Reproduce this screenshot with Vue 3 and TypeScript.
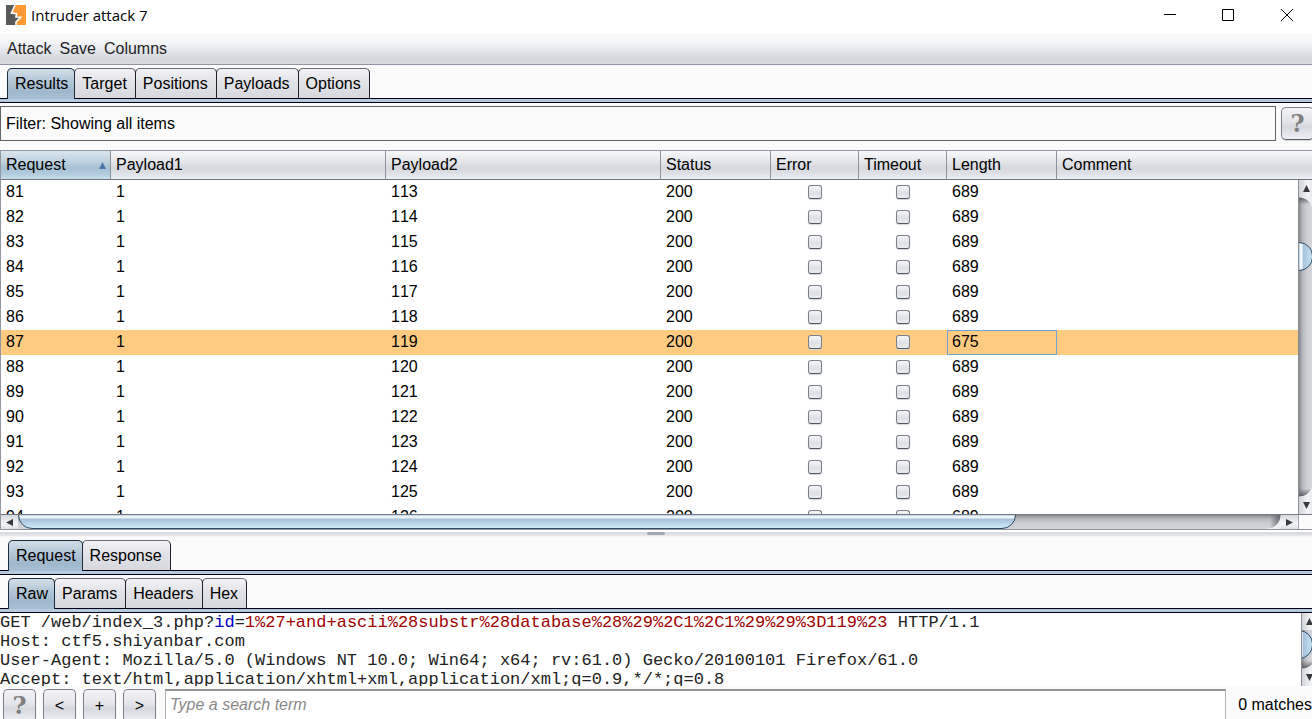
<script setup lang="ts">
import { ref } from 'vue'

interface Row {
  id: number
  payload1: string
  payload2: number
  status: number
  length: number
}

const menus = ['Attack', 'Save', 'Columns']
const mainTabs = ['Results', 'Target', 'Positions', 'Payloads', 'Options']
const messageTabs = ['Request', 'Response']
const viewTabs = ['Raw', 'Params', 'Headers', 'Hex']
const activeMain = ref('Results')
const activeMessage = ref('Request')
const activeView = ref('Raw')
const selected = ref(87)
const search = ref('')

const columns = [
  { name: 'Request', cls: 'w-request' },
  { name: 'Payload1', cls: 'w-payload' },
  { name: 'Payload2', cls: 'w-payload' },
  { name: 'Status', cls: 'w-request' },
  { name: 'Error', cls: 'w-flag' },
  { name: 'Timeout', cls: 'w-flag' },
  { name: 'Length', cls: 'w-request' },
  { name: 'Comment', cls: '' },
]

const rows: Row[] = Array.from({ length: 14 }, (_, i) => ({
  id: 81 + i,
  payload1: '1',
  payload2: 113 + i,
  status: 200,
  length: 81 + i === 87 ? 675 : 689,
}))
</script>

<template>
  <div class="window">
    <header class="titlebar">
      <svg class="logo" viewBox="0 0 20 20" aria-hidden="true">
        <rect width="20" height="20" fill="#58595b" />
        <path d="M9 0H20V20H10L9.500 17L14.500 12L10 11.500V8.500L5.500 8Z" fill="#ff9933" />
        <path d="M9 0L5.500 8L10.500 8.700L10 12L14.700 12.300L10 17V20" fill="none" stroke="#fff" stroke-width="1.600" />
      </svg>
      <h1>Intruder attack 7</h1>
      <div class="controls">
        <button type="button" aria-label="Minimize"><svg viewBox="0 0 12 12"><path d="M0 5.500H12" /></svg></button>
        <button type="button" aria-label="Maximize"><svg viewBox="0 0 12 12"><path d="M.5 .5H11.500V11.500H.5Z" /></svg></button>
        <button type="button" aria-label="Close"><svg viewBox="0 0 12 12"><path d="M0 0L12 12M12 0L0 12" /></svg></button>
      </div>
    </header>

    <nav class="menubar">
      <button v-for="m in menus" :key="m" type="button">{{ m }}</button>
    </nav>

    <div class="tabs main" role="tablist">
      <button v-for="t in mainTabs" :key="t" type="button" role="tab" :aria-selected="activeMain === t" :class="{ active: activeMain === t }" @click="activeMain = t">{{ t }}</button>
    </div>

    <div class="filter">
      <button class="filter-box" type="button">Filter: Showing all items</button>
      <button class="tool help" type="button" aria-label="Help">?</button>
    </div>

    <section class="results">
      <div class="table-view">
        <table>
          <thead>
            <tr>
              <th v-for="(c, i) in columns" :key="c.name" :class="[c.cls, { sorted: i === 0 }]" scope="col">
                {{ c.name }}
                <svg v-if="i === 0" class="sort" viewBox="0 0 7 7" aria-hidden="true"><path d="M3.500 0L7 7H0Z" fill="#4a78ad" /></svg>
              </th>
            </tr>
          </thead>
          <tbody>
            <tr v-for="r in rows" :key="r.id" :class="{ selected: selected === r.id }" @click="selected = r.id">
              <td>{{ r.id }}</td>
              <td>{{ r.payload1 }}</td>
              <td>{{ r.payload2 }}</td>
              <td>{{ r.status }}</td>
              <td class="flag"><input type="checkbox" :aria-label="`Error, request ${r.id}`" /></td>
              <td class="flag"><input type="checkbox" :aria-label="`Timeout, request ${r.id}`" /></td>
              <td :class="{ focus: selected === r.id }">{{ r.length }}</td>
              <td></td>
            </tr>
          </tbody>
        </table>
        <div class="vscroll table-scroll">
          <button type="button" aria-label="Scroll up"><svg viewBox="0 0 7 7"><path d="M3.500 0L7 7H0Z" /></svg></button>
          <div class="track"><span class="cap-top"></span><span class="thumb"></span><span class="cap-bottom"></span></div>
          <button type="button" aria-label="Scroll down"><svg viewBox="0 0 7 7"><path d="M0 0H7L3.500 7Z" /></svg></button>
        </div>
      </div>
      <div class="hscroll">
        <button type="button" aria-label="Scroll left"><svg viewBox="0 0 7 7"><path d="M7 0V7L0 3.500Z" /></svg></button>
        <div class="htrack"><span class="hthumb"></span><span class="cap-right"></span></div>
        <button type="button" aria-label="Scroll right"><svg viewBox="0 0 7 7"><path d="M0 0L7 3.500L0 7Z" /></svg></button>
        <span class="corner"></span>
      </div>
    </section>

    <div class="splitter"><span></span></div>

    <div class="tabs" role="tablist">
      <button v-for="t in messageTabs" :key="t" type="button" role="tab" :aria-selected="activeMessage === t" :class="{ active: activeMessage === t }" @click="activeMessage = t">{{ t }}</button>
    </div>
    <div class="tabs" role="tablist">
      <button v-for="t in viewTabs" :key="t" type="button" role="tab" :aria-selected="activeView === t" :class="{ active: activeView === t }" @click="activeView = t">{{ t }}</button>
    </div>

    <section class="message">
      <pre>GET /web/index_3.php?<span class="param">id</span>=<span class="value">1%27+and+ascii%28substr%28database%28%29%2C1%2C1%29%29%3D119%23</span> HTTP/1.1
Host: ctf5.shiyanbar.com
User-Agent: Mozilla/5.0 (Windows NT 10.0; Win64; x64; rv:61.0) Gecko/20100101 Firefox/61.0
Accept: text/html,application/xhtml+xml,application/xml;q=0.9,*/*;q=0.8</pre>
      <div class="vscroll message-scroll">
        <button type="button" aria-label="Scroll up"><svg viewBox="0 0 7 7"><path d="M3.500 0L7 7H0Z" /></svg></button>
        <div class="track"><span class="thumb"></span><span class="cap-bottom"></span></div>
        <button type="button" aria-label="Scroll down"><svg viewBox="0 0 7 7"><path d="M0 0H7L3.500 7Z" /></svg></button>
      </div>
    </section>

    <footer class="search">
      <button class="tool help" type="button" aria-label="Search help">?</button>
      <button class="tool" type="button" aria-label="Previous match">&lt;</button>
      <button class="tool" type="button" aria-label="Add">+</button>
      <button class="tool" type="button" aria-label="Next match">&gt;</button>
      <input v-model="search" type="text" aria-label="Search" placeholder="Type a search term" />
      <output>0 matches</output>
    </footer>
  </div>
</template>

<style>
body {
  margin: 0;
  background: #fbfbfb;
}
</style>

<style scoped>
.window {
  display: flex;
  flex-direction: column;
  height: 100vh;
  overflow: hidden;
  background: #fbfbfb;
  color: #000;
  font: 16px/18px "Liberation Sans", Arial, sans-serif;
}
.window > * {
  flex: none;
}
.window * {
  box-sizing: border-box;
}
button {
  margin: 0;
  padding: 0;
  border: 0;
  background: none;
  color: inherit;
  font: inherit;
}
.titlebar {
  display: flex;
  align-items: center;
  height: 34px;
  padding: 0 0 4px 6px;
  background: #fff;
}
.logo {
  width: 20px;
  height: 20px;
}
h1 {
  margin: 0 auto 0 5px;
  font: 15px/20px "Open Sans", "Noto Sans", sans-serif;
}
.controls {
  display: flex;
  margin-right: -5px;
}
.controls button {
  display: flex;
  align-items: center;
  justify-content: center;
  width: 58px;
  height: 30px;
}
.controls button:last-child {
  width: 60px;
}
.controls svg {
  width: 12px;
  height: 12px;
  fill: none;
  stroke: #000;
  stroke-width: 1;
}
.menubar {
  display: flex;
  gap: 8px;
  height: 31px;
  padding: 0 7px 1px;
  border-bottom: 1px solid #8f95a3;
  background: linear-gradient(#f8f9fa 0, #f5f6f8 25%, #e3e6ea 55%, #d3d6dc 85%, #d9dce2 100%);
  color: #232323;
}
.tabs {
  display: flex;
  align-items: flex-end;
  height: 38px;
  padding: 3px 8px 0;
  background: linear-gradient(#000014, #000014) 0 33px / 100% 1px no-repeat, linear-gradient(#b5cade, #b5cade) 0 34px / 100% 3px no-repeat, linear-gradient(#000014, #000014) 0 37px / 100% 1px no-repeat;
}
.tabs.main {
  padding-left: 7px;
}
.tabs button {
  height: 30px;
  margin-right: -1px;
  margin-bottom: 5px;
  padding: 0 8px 0 7px;
  border: 1px solid #20202c;
  border-top-color: #696b76;
  border-bottom: 0;
  border-radius: 5px 5px 0 0;
  background: linear-gradient(#f3f3f6 0, #e3e4e8 40%, #d7d8de 100%);
}
.tabs button.active {
  z-index: 1;
  height: 31px;
  margin-bottom: 4px;
  padding: 0 6px 1px 7px;
  border-color: #1b2b3e;
  background: linear-gradient(#d3dfe8 0, #b2c6d6 40%, #a0b7cb 75%, #a8c0d5 100%);
}
.filter {
  display: flex;
  align-items: center;
  justify-content: space-between;
  gap: 5px;
  height: 47px;
  padding: 3px 0 9px;
  overflow: hidden;
}
.filter-box {
  flex: 1;
  height: 35px;
  padding-left: 5px;
  border: 1px solid #646464;
  text-align: left;
}
.tool {
  flex: none;
  width: 33px;
  height: 33px;
  border: 1px solid #7c808b;
  border-bottom-color: #545b68;
  border-radius: 5px;
  background: linear-gradient(#f4f4f7 0, #e3e4e9 45%, #d6d8df 60%, #eff0f6 100%);
  box-shadow: 0 1px 1px #d4d6db;
}
.help {
  color: #808080;
  font: bold 24px/24px "DejaVu Serif", serif;
}
.filter .tool {
  margin-right: -2px;
}
.results {
  display: flex;
  flex: 1 1 0;
  flex-direction: column;
  min-height: 0;
  border-top: 1px solid #9297a1;
  border-left: 1px solid #9297a1;
  background: #fff;
}
.table-view {
  position: relative;
  flex: 1 1 0;
  min-height: 0;
  overflow: hidden;
}
table {
  width: 100%;
  border-collapse: separate;
  border-spacing: 0;
  table-layout: fixed;
}
th {
  height: 29px;
  padding: 0 5px 1px;
  border-right: 1px solid #8e929c;
  border-bottom: 1px solid #6f7582;
  background: linear-gradient(#f8f9fb 0, #e2e4e8 40%, #d6d8de 60%, #dde0e6 80%, #edf0f5 100%);
  font-weight: normal;
  text-align: left;
  white-space: nowrap;
}
th:last-child {
  border-right: 0;
}
th.sorted {
  background: linear-gradient(#dce6ed 0, #bdd0de 40%, #a8c0d2 60%, #b4cede 85%, #c6e0f0 100%);
}
.sort {
  float: right;
  width: 7px;
  height: 7px;
  margin-top: 6px;
  margin-right: -1px;
}
.w-request {
  width: 110px;
}
.w-payload {
  width: 275px;
}
.w-flag {
  width: 88px;
}
td {
  height: 25px;
  padding: 0 5px 1px;
  font-kerning: none;
}
.selected td {
  background: #ffcb80;
}
.selected td.focus {
  box-shadow: inset 0 0 0 1px #73a4d1;
}
.flag {
  line-height: 0;
  text-align: center;
}
.flag input {
  width: 14px;
  height: 14px;
  margin: 0;
  border: 1px solid #7b7f89;
  border-bottom-color: #4e5460;
  border-radius: 3px;
  appearance: none;
  background: linear-gradient(#f7f7f9 0, #dcdfe4 60%, #eceef2 100%);
  box-shadow: 0 1px 1px #d4d6db;
  vertical-align: middle;
}
.vscroll {
  display: flex;
  flex-direction: column;
  border-left: 1px solid #8c8f94;
  background: #eef0f2;
  overflow: hidden;
}
.vscroll button {
  display: flex;
  flex: none;
  align-items: center;
  justify-content: center;
  width: 15px;
  height: 17px;
  background: linear-gradient(90deg, #d0d4d8, #f4f5f7 60%, #dfe2e6);
}
.vscroll svg,
.hscroll svg {
  width: 7px;
  height: 7px;
  fill: #3a3a3a;
}
.table-scroll {
  position: absolute;
  top: 29px;
  right: 0;
  bottom: 0;
  width: 14px;
}
.track {
  position: relative;
  flex: 1;
  overflow: hidden;
  background: linear-gradient(90deg, #85878d 0, #b4b5bb 25%, #cecfd5 60%, #d5d6dc 100%);
}
.cap-top,
.cap-bottom {
  position: absolute;
  left: 0;
  width: 14px;
  height: 12px;
}
.cap-top {
  top: 0;
  background: radial-gradient(circle at 0 14px, transparent 13px, #eceef0 14px), linear-gradient(#55585f, transparent 60%);
}
.cap-bottom {
  bottom: 0;
  background: radial-gradient(circle at 0 -2px, transparent 13px, #eceef0 14px), linear-gradient(transparent 30%, #55585f);
}
.thumb {
  position: absolute;
  top: 45px;
  left: -14px;
  width: 28px;
  height: 29px;
  border: 1px solid #2d4a66;
  border-radius: 14px;
  background: linear-gradient(90deg, #a4bfd6 50%, #f0f6fa 55%, #f0f6fa 62%, #a5c2dc 66%, #c6e2f2 100%);
}
.hscroll {
  display: flex;
  flex: none;
  height: 16px;
  border-top: 1px solid #777a80;
  border-bottom: 1px solid #8f9299;
}
.hscroll button {
  display: flex;
  flex: none;
  align-items: center;
  justify-content: center;
  width: 17px;
  background: linear-gradient(#d4d8dc, #f3f5f7 60%, #dfe2e6);
}
.htrack {
  position: relative;
  flex: 1;
  overflow: hidden;
  background: linear-gradient(#85878d 0, #b6b7bd 25%, #cecfd5 60%, #d3d4da 100%);
}
.hthumb {
  position: absolute;
  top: -14px;
  left: 0;
  width: 79%;
  height: 28px;
  border: 1px solid #2d4a66;
  border-radius: 14px;
  background: linear-gradient(#a4bfd6 50%, #edf4f9 54%, #edf4f9 60%, #a7c2db 67%, #cfebf7 100%);
}
.cap-right {
  position: absolute;
  top: 0;
  right: 0;
  width: 14px;
  height: 14px;
  background: radial-gradient(circle at 0 0, transparent 13px, #eceef0 14px), linear-gradient(90deg, transparent 20%, #63666c);
}
.corner {
  width: 14px;
  border-left: 1px solid #a3a6ac;
  background: #fbfbfb;
}
.splitter {
  display: flex;
  height: 7px;
  background: linear-gradient(#fff 0, #fff 2px, #d8dae0 2px, #dfe1e6 5px, #fbfbfb 7px);
}
.splitter span {
  width: 18px;
  height: 3px;
  margin: 2px auto 0;
  border-radius: 2px;
  background: #a4a7ae;
}
.message {
  display: flex;
  height: 73px;
  overflow: hidden;
  background: #fff;
}
pre {
  flex: 1;
  min-width: 0;
  margin: 0;
  overflow: hidden;
  color: #222;
  font: 17px/19px "Liberation Mono", "Courier New", monospace;
}
.param {
  color: #0000c0;
}
.value {
  color: #a00000;
}
.message-scroll {
  flex: none;
  width: 11px;
}
.message-scroll .thumb {
  top: 0;
  left: -17px;
}
.search {
  display: flex;
  gap: 7px;
  height: 33px;
  padding: 3px 0 0 3px;
  overflow: hidden;
}
.search input {
  flex: 1;
  min-width: 0;
  height: 33px;
  margin: 0 5px 0 2px;
  padding: 0 4px 2px;
  border: 1px solid #b0b0b4;
  border-top: 2px solid #929296;
  border-radius: 0;
  background: #fff;
  color: #000;
  font: inherit;
}
.search input::placeholder {
  color: #8a8a8a;
  font-style: italic;
  opacity: 1;
}
output {
  line-height: 32px;
  white-space: nowrap;
}
</style>
